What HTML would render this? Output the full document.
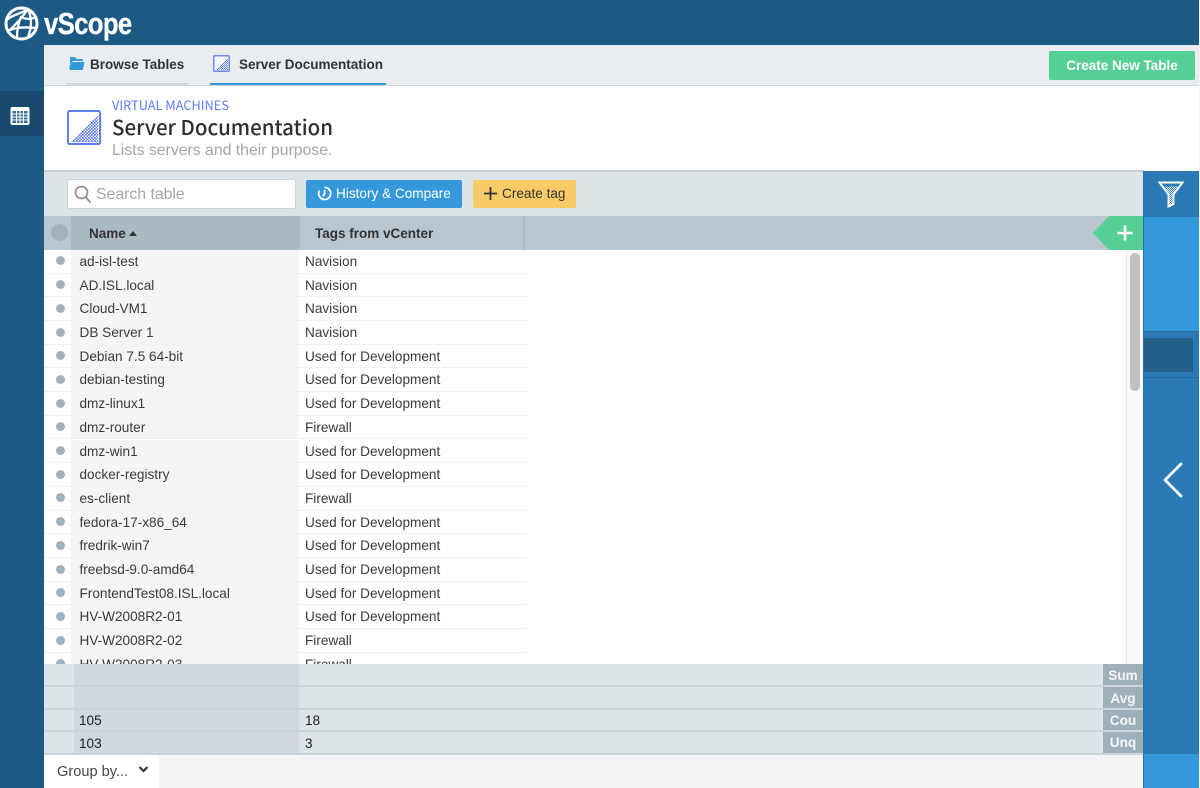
<!DOCTYPE html>
<html><head><meta charset="utf-8"><title>vScope</title>
<style>
*{box-sizing:border-box}
html,body{margin:0;padding:0;width:1200px;height:788px;overflow:hidden;background:#1c5a83;font-family:"Liberation Sans",sans-serif;color:#333}
.a{position:absolute}
.t{position:absolute;white-space:nowrap}
.row{position:absolute;left:44px;width:482px;height:24px;font-size:13.6px;line-height:23px;color:#3a3a3a}
.row i{position:absolute;left:12px;top:6.500px;width:9px;height:9px;border-radius:50%;background:#a0b2be}
.row b{position:absolute;font-weight:normal;left:35.500px;top:0}
.row u{position:absolute;text-decoration:none;left:261px;top:0}
.row s{position:absolute;text-decoration:none;left:27px;top:0;width:228px;height:23px;background:#f3f5f7}
.row em{position:absolute;left:0;right:0;top:22.700px;height:1px;background:#eff1f3}
.lb{position:absolute;left:1103px;width:40px;background:#9fb0ba;color:#f4f6f7;font-weight:bold;font-size:13.6px;text-align:center}
.ln{position:absolute;left:44px;width:1099px;height:2px;background:#cbd3d8}
</style></head><body>
<div class="a" style="left:0;top:0;width:1200px;height:788px;background:#1c5a83"></div>

<!-- logo -->
<svg class="a" style="left:4px;top:5px" width="36" height="36" viewBox="0 0 36 36" fill="none" stroke="#fff" stroke-linecap="round">
<circle cx="17.500" cy="18.500" r="15.500" stroke-width="3"/>
<path d="M4 14C10 9 17 9 24 4M24 4C28 13 28 22 24 32M24 4C20 10 12 19 6 25M6 25C13 22 22 22 32 23M13 32C13 25 14 19 17 12M17 12C21 14 26 15 32 12" stroke-width="2.300"/>
</svg>
<div class="t" style="left:44px;top:5px;font-size:31px;line-height:38px;font-weight:bold;color:#fff;transform-origin:0 50%;transform:scaleX(.83);letter-spacing:-.8px;-webkit-text-stroke:.3px #fff">vScope</div>

<!-- left nav -->
<div class="a" style="left:0;top:91px;width:44px;height:45px;background:#174a6e"></div>
<svg class="a" style="left:10px;top:106px" width="20" height="20" viewBox="0 0 20 20">
<rect x=".5" y="1" width="19" height="18" rx="2" fill="#fff"/>
<path d="M2.500 5h15v12h-15z" fill="#3d6f93"/>
<path d="M2.500 8h15M2.500 11h15M2.500 14h15M6.500 5v12M10 5v12M13.500 5v12" stroke="#fff" stroke-width="1"/>
</svg>

<!-- tabs -->
<div class="a" style="left:44px;top:45px;width:1156px;height:41px;background:#e9edf0;border-top:1px solid #dfe4e8;border-bottom:1px solid #cfd6da"></div>
<svg class="a" style="left:69px;top:57px" width="16" height="13" viewBox="0 0 16 13">
<path d="M1 0h5l1.500 2H13a1 1 0 0 1 1 1v1H4L2 6.500 1 8V1z" fill="#3498db"/>
<path d="M3.500 5H15.500L14 12a1 1 0 0 1-1 1H1.500a1 1 0 0 1-1-1V9z" fill="#3498db"/>
</svg>
<div class="t" style="left:90px;top:56px;font-size:13.5px;line-height:17px;font-weight:bold;color:#333">Browse Tables</div>
<div class="a" style="left:67px;top:83px;width:121px;height:2px;background:#d3d9dd"></div>
<svg class="a" style="left:213px;top:55px" width="17" height="17" viewBox="0 0 17 17">
<defs><pattern id="dz" width="2" height="2" patternUnits="userSpaceOnUse"><rect width="2" height="2" fill="#fff"/><rect width="1" height="1" fill="#5b7cf5"/><rect x="1" y="1" width="1" height="1" fill="#5b7cf5"/></pattern></defs>
<rect x=".75" y=".75" width="15.500" height="15.500" rx="1" fill="#f4f6fb" stroke="#6d8bf5" stroke-width="1.500"/>
<path d="M15 3V15H3z" fill="url(#dz)"/>
</svg>
<div class="t" style="left:239px;top:56px;font-size:13.5px;line-height:17px;font-weight:bold;color:#333">Server Documentation</div>
<div class="a" style="left:210px;top:83px;width:176px;height:2px;background:#3498db"></div>
<div class="t" style="left:1049px;top:51px;width:146px;height:29px;border-radius:2px;background:#55cf96;color:#fff;font-weight:bold;font-size:13.5px;line-height:29px;text-align:center">Create New Table</div>

<!-- title -->
<div class="a" style="left:44px;top:86px;width:1156px;height:85px;background:#fff"></div>
<svg class="a" style="left:67px;top:110px" width="34" height="35" viewBox="0 0 34 35">
<defs><pattern id="dy" width="3" height="3" patternUnits="userSpaceOnUse"><rect width="3" height="3" fill="#fff"/><rect width="1.700" height="1.700" fill="#5b7cf5"/><rect x="1.500" y="1.500" width="1.500" height="1.500" fill="#5b7cf5"/></pattern></defs>
<rect x="1" y="1" width="32" height="33" rx="1.500" fill="#fff" stroke="#5f80f4" stroke-width="2"/>
<path d="M31 5V32H4z" fill="url(#dy)"/>
</svg>
<div class="t" style="left:112px;top:97px;font-size:12.8px;line-height:15px;color:#5b7cf5;font-family:'Noto Sans CJK JP','Liberation Sans',sans-serif">VIRTUAL MACHINES</div>
<div class="t" style="left:112px;top:112px;font-size:20.500px;line-height:29px;font-weight:500;color:#2e2e2e;font-family:'Noto Sans CJK JP','Liberation Sans',sans-serif">Server Documentation</div>
<div class="t" style="left:112px;top:142px;font-size:15.800px;line-height:18px;color:#a3a6a8">Lists servers and their purpose.</div>

<!-- toolbar -->
<div class="a" style="left:44px;top:170px;width:1100px;height:47px;background:#dce4e7;border-top:2px solid #c7d0d4"></div>
<div class="a" style="left:67px;top:179px;width:229px;height:30px;background:#fff;border:1px solid #ccd3d7;border-radius:3px"></div>
<svg class="a" style="left:73px;top:184px" width="18" height="19" viewBox="0 0 18 19" fill="none" stroke="#8c9396" stroke-width="1.800"><circle cx="8.500" cy="8.500" r="6"/><path d="M12.800 13l4.200 5" stroke-linecap="round"/></svg>
<div class="t" style="left:96px;top:185px;font-size:15.800px;line-height:19px;color:#a3a6a8">Search table</div>
<div class="a" style="left:306px;top:180px;width:156px;height:28px;background:#3498db;border-radius:2px"></div>
<svg class="a" style="left:317px;top:186px" width="15" height="15" viewBox="0 0 15 15" fill="none" stroke="#fff" stroke-width="1.800"><path d="M7.500 1.500A6 6 0 1 1 2.500 4.500" stroke-dasharray="25 0"/><path d="M1.500 7.500h1M7.500 4v4.500L5.500 10" stroke-width="1.700"/></svg>
<div class="t" style="left:336px;top:185px;font-size:13.6px;line-height:17px;color:#fff">History &amp; Compare</div>
<div class="a" style="left:473px;top:180px;width:103px;height:28px;background:#f8cb66;border-radius:2px"></div>
<svg class="a" style="left:484px;top:187px" width="13" height="13" viewBox="0 0 13 13"><path d="M6.500 0v13M0 6.500h13" stroke="#333" stroke-width="1.800"/></svg>
<div class="t" style="left:502px;top:185px;font-size:13.6px;line-height:17px;color:#333">Create tag</div>

<!-- table head -->
<div class="a" style="left:44px;top:216px;width:1099px;height:34px;background:#b9c6cf"></div>
<div class="a" style="left:71px;top:216px;width:229px;height:34px;background:#abb9c3"></div>
<div class="a" style="left:523px;top:216px;width:2px;height:34px;background:#adbac4"></div>
<div class="a" style="left:51px;top:224px;width:17px;height:17px;border-radius:50%;background:#a0b2be"></div>
<div class="t" style="left:89px;top:225px;font-size:13.5px;line-height:17px;font-weight:bold;color:#333">Name</div>
<div class="a" style="left:129px;top:231px;width:0;height:0;border-left:4.500px solid transparent;border-right:4.500px solid transparent;border-bottom:5px solid #333"></div>
<div class="t" style="left:315px;top:225px;font-size:13.5px;line-height:17px;font-weight:bold;color:#333">Tags from vCenter</div>
<svg class="a" style="left:1093px;top:216px" width="50" height="34" viewBox="0 0 50 34"><path d="M0 17L16 0H50V34H16z" fill="#55cf96"/><path d="M32 9.500v15M24.500 17h15" stroke="#fff" stroke-width="2.600"/></svg>

<!-- rows -->
<div class="a" style="left:44px;top:250px;width:1082px;height:414px;background:#fff"></div>
<div class="a" style="left:1126px;top:250px;width:17px;height:414px;background:#fafafa;border-left:1px solid #eaeaea"></div>
<div class="a" style="left:1130px;top:253px;width:10px;height:138px;border-radius:5px;background:#c1c1c1"></div>
<div class="a" style="left:44px;top:250px;width:482px;height:414px;overflow:hidden">
<div style="position:relative;left:-44px;top:-249.600px;height:700px">
<div class="row" style="top:249.500px"><s></s><em></em><i></i><b>ad-isl-test</b><u>Navision</u></div>
<div class="row" style="top:273.200px"><s></s><em></em><i></i><b>AD.ISL.local</b><u>Navision</u></div>
<div class="row" style="top:296.900px"><s></s><em></em><i></i><b>Cloud-VM1</b><u>Navision</u></div>
<div class="row" style="top:320.600px"><s></s><em></em><i></i><b>DB Server 1</b><u>Navision</u></div>
<div class="row" style="top:344.300px"><s></s><em></em><i></i><b>Debian 7.5 64-bit</b><u>Used for Development</u></div>
<div class="row" style="top:368px"><s></s><em></em><i></i><b>debian-testing</b><u>Used for Development</u></div>
<div class="row" style="top:391.700px"><s></s><em></em><i></i><b>dmz-linux1</b><u>Used for Development</u></div>
<div class="row" style="top:415.400px"><s></s><em></em><i></i><b>dmz-router</b><u>Firewall</u></div>
<div class="row" style="top:439.100px"><s></s><em></em><i></i><b>dmz-win1</b><u>Used for Development</u></div>
<div class="row" style="top:462.800px"><s></s><em></em><i></i><b>docker-registry</b><u>Used for Development</u></div>
<div class="row" style="top:486.500px"><s></s><em></em><i></i><b>es-client</b><u>Firewall</u></div>
<div class="row" style="top:510.200px"><s></s><em></em><i></i><b>fedora-17-x86_64</b><u>Used for Development</u></div>
<div class="row" style="top:533.900px"><s></s><em></em><i></i><b>fredrik-win7</b><u>Used for Development</u></div>
<div class="row" style="top:557.600px"><s></s><em></em><i></i><b>freebsd-9.0-amd64</b><u>Used for Development</u></div>
<div class="row" style="top:581.300px"><s></s><em></em><i></i><b>FrontendTest08.ISL.local</b><u>Used for Development</u></div>
<div class="row" style="top:605px"><s></s><em></em><i></i><b>HV-W2008R2-01</b><u>Used for Development</u></div>
<div class="row" style="top:628.700px"><s></s><em></em><i></i><b>HV-W2008R2-02</b><u>Firewall</u></div>
<div class="row" style="top:652.400px"><s></s><em></em><i></i><b>HV-W2008R2-03</b><u>Firewall</u></div>
</div></div>

<!-- footer -->
<div class="a" style="left:44px;top:664px;width:1099px;height:90px;background:#dce4e7"></div>
<div class="a" style="left:74px;top:664px;width:225px;height:90px;background:#cfd8df"></div>
<div class="ln" style="top:685px"></div>
<div class="ln" style="top:708px"></div>
<div class="ln" style="top:730px"></div>
<div class="ln" style="top:753px"></div>
<div class="lb" style="top:664px;height:21px;line-height:23px">Sum</div>
<div class="lb" style="top:687px;height:21px;line-height:23px">Avg</div>
<div class="lb" style="top:710px;height:20px;line-height:21px">Cou</div>
<div class="lb" style="top:732px;height:21px;line-height:22px">Unq</div>
<div class="t" style="left:79px;top:712px;font-size:13.6px;line-height:17px;color:#222">105</div>
<div class="t" style="left:305px;top:712px;font-size:13.6px;line-height:17px;color:#222">18</div>
<div class="t" style="left:79px;top:735px;font-size:13.6px;line-height:17px;color:#222">103</div>
<div class="t" style="left:305px;top:735px;font-size:13.6px;line-height:17px;color:#222">3</div>

<!-- group by -->
<div class="a" style="left:44px;top:755px;width:1099px;height:33px;background:#f2f4f6"></div>
<div class="a" style="left:44px;top:755px;width:115px;height:33px;background:#fff"></div>
<div class="t" style="left:57px;top:763px;font-size:14.600px;line-height:18px;color:#444">Group by...</div>
<svg class="a" style="left:138px;top:765px" width="11" height="9" viewBox="0 0 11 9" fill="none" stroke="#333" stroke-width="2.200"><path d="M1.500 2L5.500 6L9.500 2"/></svg>

<!-- right panel -->
<div class="a" style="left:1143px;top:171px;width:57px;height:617px;background:#2b7ab5;border-left:1px solid #2873ac"></div>
<div class="a" style="left:1144px;top:217px;width:56px;height:114px;background:#3498db"></div>
<div class="a" style="left:1144px;top:331px;width:56px;height:47px;background:#2b79b4;border-top:1px solid #256ba0;border-bottom:1px solid #256ba0"></div>
<div class="a" style="left:1144px;top:338px;width:49px;height:34px;background:#245f8a;border-radius:1px"></div>
<div class="a" style="left:1144px;top:754px;width:56px;height:34px;background:#3498db"></div>
<svg class="a" style="left:1158px;top:181px" width="26" height="27" viewBox="0 0 26 27" fill="none">
<defs><pattern id="dx" width="2" height="2" patternUnits="userSpaceOnUse"><rect width="2" height="2" fill="#2b7ab5"/><rect width="1" height="1" fill="#fff"/><rect x="1" y="1" width="1" height="1" fill="#fff"/></pattern></defs>
<path d="M6 5.500H20L15.500 14V22L11.500 24V14z" fill="url(#dx)"/>
<path d="M1.500 1.500H24.500L15.500 13.500V23L10.500 25.500V13.500z" stroke="#fff" stroke-width="1.900"/>
</svg>
<svg class="a" style="left:1161px;top:461px" width="24" height="38" viewBox="0 0 24 38" fill="none"><path d="M20 3L4 19L20 35" stroke="#fff" stroke-width="2.800" stroke-linecap="round" stroke-linejoin="round"/></svg>
<div class="a" style="left:1199px;top:0;width:1px;height:788px;background:#f2f5f7"></div>
</body></html>
